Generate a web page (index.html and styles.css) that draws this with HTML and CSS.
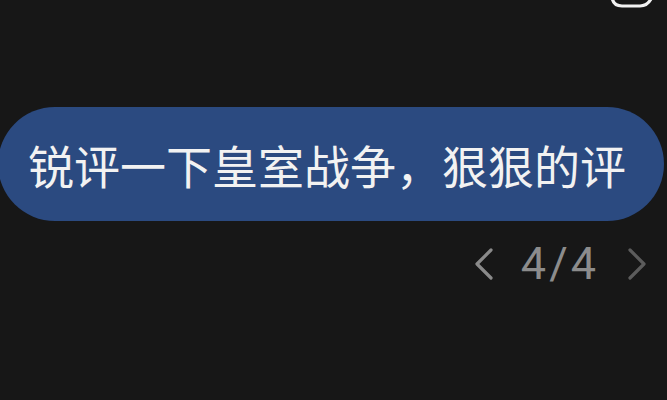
FILE: index.html
```html
<!DOCTYPE html>
<html lang="zh">
<head>
<meta charset="utf-8">
<link rel="stylesheet" href="styles.css">
</head>
<body>
<svg class="top-icon" width="667" height="12" viewBox="0 0 667 12" xmlns="http://www.w3.org/2000/svg">
  <path d="M612 -3 Q613 6 622 6 L640 6 Q648 6 652 -3" fill="none" stroke="#f2f2f2" stroke-width="3.2" stroke-linecap="round"/>
</svg>
<main class="page">
  <div class="bubble">
    <span class="bubble-text">锐评一下皇室战争，狠狠的评</span>
  </div>
  <div class="pager">
    <svg class="chev" width="19" height="32" viewBox="0 0 19 32" xmlns="http://www.w3.org/2000/svg">
      <path d="M17 2 L3 16 L17 30" fill="none" stroke="#8a8a8a" stroke-width="3.2" stroke-linecap="round" stroke-linejoin="round"/>
    </svg>
    <span class="count">4/4</span>
    <svg class="chev" width="20" height="32" viewBox="0 0 20 32" xmlns="http://www.w3.org/2000/svg">
      <path d="M3 2 L17 16 L3 30" fill="none" stroke="#5c5c5c" stroke-width="3.2" stroke-linecap="round" stroke-linejoin="round"/>
    </svg>
  </div>
</main>
</body>
</html>
```
FILE: styles.css
```css
html, body {
  margin: 0;
  padding: 0;
  background: #171717;
  width: 667px;
  height: 400px;
  overflow: hidden;
}
.top-icon {
  position: absolute;
  left: 0;
  top: 0;
}
.page {
  padding-top: 107px;
}
.bubble {
  margin-left: -2px;
  width: 666px;
  height: 114px;
  border-radius: 57px;
  background: #2b4a80;
  display: flex;
  align-items: center;
  padding-left: 30px;
  box-sizing: border-box;
}
.bubble-text {
  font-family: "Noto Sans CJK SC", "Noto Sans", sans-serif;
  font-size: 46px;
  line-height: 1;
  color: #f2f2f2;
  white-space: nowrap;
}
.pager {
  display: flex;
  justify-content: flex-end;
  align-items: center;
  padding-right: 20px;
  margin-top: 26px;
  height: 34px;
}
.count {
  font-family: Roboto, "Liberation Sans", sans-serif;
  font-size: 45px;
  line-height: 34px;
  color: #8c8c8c;
  margin: 0 28px 0 28px;
  letter-spacing: 3px;
}
```
